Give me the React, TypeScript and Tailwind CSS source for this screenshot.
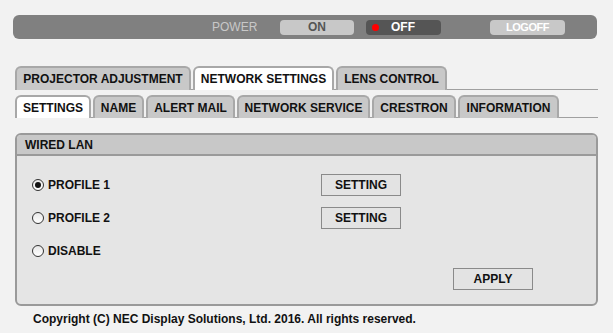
const topTabs = [
  { label: "PROJECTOR ADJUSTMENT", w: "w-[176px]", active: false },
  { label: "NETWORK SETTINGS", w: "w-[141px]", active: true },
  { label: "LENS CONTROL", w: "w-[111px]", active: false },
];

const subTabs = [
  { label: "SETTINGS", w: "w-[76px]", active: true },
  { label: "NAME", w: "w-[51px]", active: false },
  { label: "ALERT MAIL", w: "w-[89px]", active: false },
  { label: "NETWORK SERVICE", w: "w-[133px]", active: false },
  { label: "CRESTRON", w: "w-[84px]", active: false },
  { label: "INFORMATION", w: "w-[101px]", active: false },
];

function TabRow({ tabs, height }: { tabs: { label: string; w: string; active: boolean }[]; height: string }) {
  return (
    <div className="ml-[15px] flex w-[583px] items-end gap-[2px] border-b border-[#a0a0a0]">
      {tabs.map((t) => (
        <div
          key={t.label}
          className={`${t.w} ${height} -mb-px flex items-center justify-center rounded-t-[6px] border-2 border-b-0 border-[#a8a8a8] text-[12px] font-bold text-[#111] ${
            t.active ? "bg-white" : "bg-[#c8c8c8]"
          }`}
        >
          {t.label}
        </div>
      ))}
    </div>
  );
}

function Radio({ checked }: { checked?: boolean }) {
  return (
    <span className="flex h-[12px] w-[12px] items-center justify-center rounded-full border border-[#333] bg-gradient-to-b from-[#e8e8e8] to-white">
      {checked && <span className="h-[6px] w-[6px] rounded-full bg-[#111]" />}
    </span>
  );
}

function Btn({ label }: { label: string }) {
  return (
    <button
      type="button"
      className="flex h-[22px] w-[80px] items-center justify-center border border-[#8a8a8a] bg-[#e3e3e3] text-[12px] font-bold text-[#111]"
    >
      {label}
    </button>
  );
}

const rows = [
  { label: "PROFILE 1", checked: true, setting: true },
  { label: "PROFILE 2", checked: false, setting: true },
  { label: "DISABLE", checked: false, setting: false },
];

export default function App() {
  return (
    <div
      className="h-[333px] w-[613px] overflow-hidden bg-[#f2f2f2] pt-[15px]"
      style={{ fontFamily: '"Liberation Sans", Arial, sans-serif' }}
    >
      <div className="ml-[13px] flex h-[24px] w-[584px] items-center rounded-[6px] bg-[#808080] pl-[199px]">
        <span className="w-[68px] text-[12px] text-[#c8c8c8]">POWER</span>
        <span className="flex h-[15px] w-[74px] items-center justify-center rounded-[4px] bg-[#c8c8c8] text-[12px] font-bold text-[#555]">
          ON
        </span>
        <span className="ml-[12px] flex h-[15px] w-[75px] items-center rounded-[4px] bg-[#555] pl-[6px] text-[12px] font-bold text-white">
          <span className="h-[7px] w-[7px] rounded-full bg-[#ff0000]" />
          <span className="ml-[12px]">OFF</span>
        </span>
        <span className="ml-[49px] flex h-[15px] w-[75px] items-center justify-center rounded-[4px] bg-[#c8c8c8] text-[11px] font-bold tracking-[-0.5px] text-white">
          LOGOFF
        </span>
      </div>

      <div className="mt-[27px]">
        <TabRow tabs={topTabs} height="h-[24px]" />
      </div>
      <div className="mt-[5px]">
        <TabRow tabs={subTabs} height="h-[23px]" />
      </div>

      <div className="ml-[15px] mt-[15px] w-[583px] overflow-hidden rounded-[6px] border-2 border-[#9a9a9a] bg-[#e5e5e5]">
        <div className="flex h-[21px] items-center border-b-2 border-[#9a9a9a] bg-[#c8c8c8] pl-[8px] text-[12px] font-bold text-[#111]">
          WIRED LAN
        </div>
        <div className="flex flex-col gap-[11px] pl-[15px] pt-[18px]">
          {rows.map((r) => (
            <div key={r.label} className="flex h-[22px] items-center">
              <div className="flex w-[289px] items-center gap-[4px] text-[12px] font-bold text-[#111]">
                <Radio checked={r.checked} />
                {r.label}
              </div>
              {r.setting && <Btn label="SETTING" />}
            </div>
          ))}
        </div>
        <div className="mt-[6px] flex justify-end pb-[14px] pr-[63px]">
          <Btn label="APPLY" />
        </div>
      </div>

      <div className="ml-[33px] mt-[4px] text-[12px] font-bold text-[#111]">
        Copyright (C) NEC Display Solutions, Ltd. 2016. All rights reserved.
      </div>
    </div>
  );
}
